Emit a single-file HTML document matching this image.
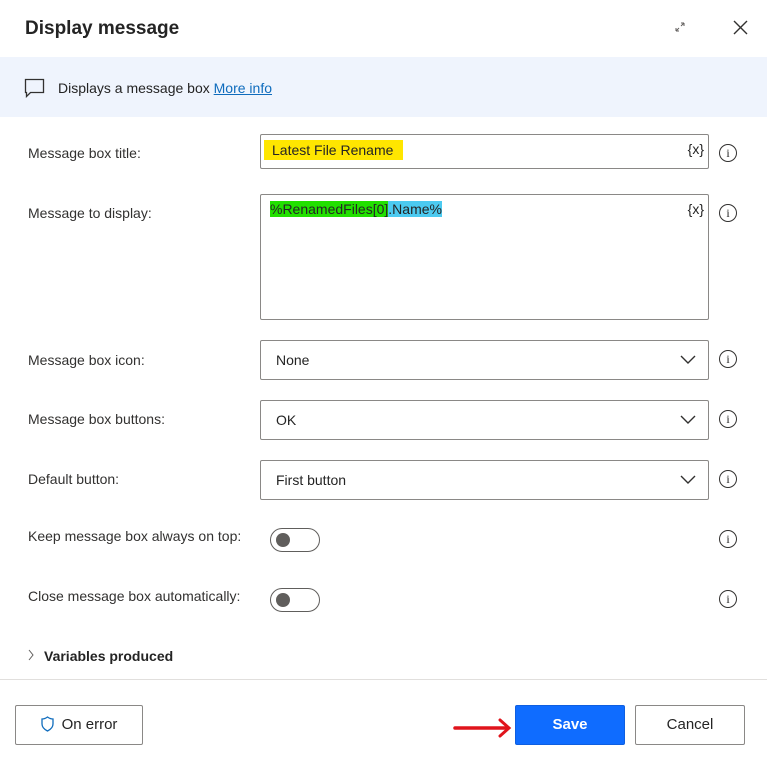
<!DOCTYPE html><html><head><style>
body{margin:0;width:767px;height:767px;background:#fff;font-family:"Liberation Sans",sans-serif;color:#242424;position:relative;overflow:hidden;font-size:14px}
.a{position:absolute}
.lbl{position:absolute;left:28px;font-size:14px;color:#323130}
.box{position:absolute;left:260px;width:447px;border:1px solid #8a8886;border-radius:2px;background:#fff}
.info{position:absolute;left:719px;width:16px;height:16px;border:1.3px solid #323130;border-radius:50%;font-size:12px;text-align:center;line-height:16px;font-family:"Liberation Serif",serif}
.dd{height:38px}
.dd span{position:absolute;left:15px;top:11px;font-size:14px}
.chev{position:absolute;right:12px;top:12px}
.tog{position:absolute;left:270px;width:48px;height:22px;border:1px solid #605e5c;border-radius:12px}
.tog:after{content:"";position:absolute;left:5px;top:4px;width:14px;height:14px;border-radius:50%;background:#605e5c}
.btn{position:absolute;top:705px;height:38px;border:1px solid #8a8886;border-radius:2px;font-size:15px;text-align:center;line-height:38px;background:#fff}
</style></head><body>
<div class="a" style="left:25px;top:18px;font-size:19px;font-weight:bold;color:#242424">Display message</div>
<svg class="a" style="left:673px;top:20px" width="14" height="14"><path d="M3 11L6 8M3 11h3M3 11V8M11 3L8 6M11 3H8M11 3v3" stroke="#605e5c" fill="none" stroke-width="1"/></svg>
<svg class="a" style="left:733px;top:20px" width="15" height="15"><path d="M1 1L14 14M14 1L1 14" stroke="#323130" stroke-width="1.4"/></svg>
<div class="a" style="left:0;top:57px;width:767px;height:60px;background:#eff4fd"></div>
<svg class="a" style="left:24px;top:78px" width="22" height="20"><path d="M1.5 1.5h18v13h-13l-4 4v-4h-1z" stroke="#323130" fill="none" stroke-width="1.3"/></svg>
<div class="a" style="left:58px;top:80px">Displays a message box <span style="color:#0f6cbd;text-decoration:underline">More info</span></div>

<div class="lbl" style="top:145px">Message box title:</div>
<div class="box" style="top:134px;height:33px"><span class="a" style="left:3px;top:5px;background:#ffe600;padding:2px 10px 2px 8px;font-size:14px">Latest File Rename</span><span class="a" style="right:4px;top:6px;font-size:14px">{x}</span></div>
<div class="info" style="top:144px">i</div>

<div class="lbl" style="top:205px">Message to display:</div>
<div class="box" style="top:194px;height:124px"><span class="a" style="left:9px;top:6px;font-size:14px;line-height:17px"><span style="background:#22e000">%RenamedFiles[0]</span><span style="background:#4ccaf0">.Name%</span></span><span class="a" style="right:4px;top:6px">{x}</span></div>
<div class="info" style="top:204px">i</div>

<div class="lbl" style="top:352px">Message box icon:</div>
<div class="box dd" style="top:340px"><span>None</span><svg class="chev" width="16" height="12"><path d="M1 3l7 7 7-7" stroke="#323130" fill="none" stroke-width="1.4"/></svg></div>
<div class="info" style="top:350px">i</div>
<div class="lbl" style="top:411px">Message box buttons:</div>
<div class="box dd" style="top:400px"><span>OK</span><svg class="chev" width="16" height="12"><path d="M1 3l7 7 7-7" stroke="#323130" fill="none" stroke-width="1.4"/></svg></div>
<div class="info" style="top:410px">i</div>
<div class="lbl" style="top:471px">Default button:</div>
<div class="box dd" style="top:460px"><span>First button</span><svg class="chev" width="16" height="12"><path d="M1 3l7 7 7-7" stroke="#323130" fill="none" stroke-width="1.4"/></svg></div>
<div class="info" style="top:470px">i</div>

<div class="lbl" style="top:528px">Keep message box always on top:</div>
<div class="tog" style="top:528px"></div>
<div class="info" style="top:530px">i</div>
<div class="lbl" style="top:588px">Close message box automatically:</div>
<div class="tog" style="top:588px"></div>
<div class="info" style="top:590px">i</div>

<svg class="a" style="left:27px;top:649px" width="8" height="12"><path d="M2 1l4 5-4 5" stroke="#605e5c" fill="none"/></svg>
<div class="a" style="left:44px;top:648px;font-weight:bold;font-size:14px">Variables produced</div>
<div class="a" style="left:0;top:679px;width:767px;height:1px;background:#e1dfdd"></div>

<div class="btn" style="left:15px;width:126px"><svg style="vertical-align:-3px;margin-right:8px" width="13" height="16"><path d="M6.5 1C4.5 2.5 3 3 1 3v5c0 3.5 2.5 5.5 5.5 7 3-1.5 5.5-3.5 5.5-7V3C10 3 8.5 2.5 6.5 1z" stroke="#0f6cbd" fill="none" stroke-width="1.3"/></svg>On error</div>
<svg class="a" style="left:452px;top:717px" width="62" height="22"><path d="M3 11H56" stroke="#e0141c" stroke-width="3.5" stroke-linecap="round"/><path d="M48 3l9 8-9 8" stroke="#e0141c" stroke-width="3" fill="none" stroke-linecap="round"/></svg>
<div class="btn" style="left:515px;width:108px;background:#0f6cff;border-color:#0f5fe0;color:#fff;font-weight:bold">Save</div>
<div class="btn" style="left:635px;width:108px">Cancel</div>
</body></html>
